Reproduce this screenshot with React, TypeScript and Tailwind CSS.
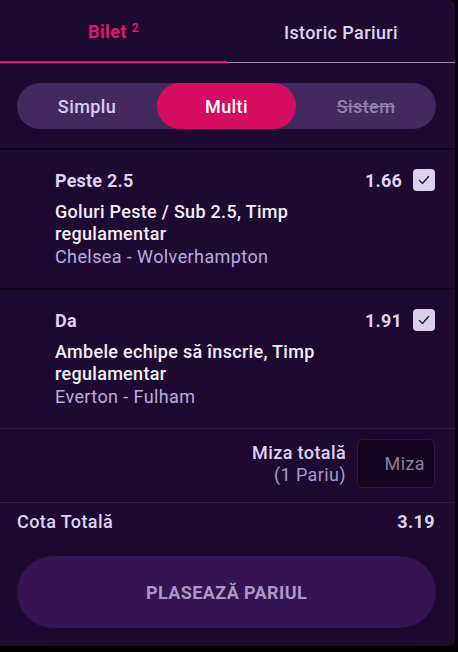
import React from "react";

function Check() {
  return (
    <div className="w-[22px] h-[22px] rounded-[4px] bg-[#d9d0ee] flex items-center justify-center">
      <svg width="16" height="16" viewBox="0 0 16 16" fill="none">
        <path d="M3.5 8.5 L6.5 11.5 L12.5 4.5" stroke="#2a1a40" strokeWidth="1.4" strokeLinecap="round" strokeLinejoin="round" />
      </svg>
    </div>
  );
}

function Bet({ pick, odds, market, teams }: { pick: string; odds: string; market: string; teams: string }) {
  return (
    <div className="pl-[55px] pr-[20px] pt-[19px] pb-[20px] flex flex-col">
      <div className="flex items-center justify-between h-[22px]">
        <span className="text-[18px] font-bold tracking-[0.2px] text-[#dcd2f2]">{pick}</span>
        <div className="flex items-center gap-[11px]">
          <span className="text-[18px] font-bold tracking-[0.2px] text-[#dcd2f2]">{odds}</span>
          <Check />
        </div>
      </div>
      <div className="mt-[10px] text-[18px] font-medium tracking-[0.3px] leading-[22px] text-[#f3eefc] w-[300px]">{market}</div>
      <div className="mt-[1px] text-[18px] tracking-[0.4px] leading-[22px] text-[#b9abe2]">{teams}</div>
    </div>
  );
}

export default function App() {
  return (
    <div className="w-[458px] h-[652px] bg-black" style={{ fontFamily: "Roboto, 'Liberation Sans', sans-serif" }}>
      <div className="w-[455px] h-[646px] bg-[#1e0a31] rounded-r-[6px] flex flex-col">
        {/* Tabs */}
        <div className="flex h-[64px]">
          <div className="w-[227px] flex flex-col">
            <div className="flex-1 flex items-center justify-center pt-[2px]">
              <span className="text-[18px] font-bold tracking-[0.4px] text-[#e0186c]">
                Bilet <span className="text-[12px] relative top-[-6px]">2</span>
              </span>
            </div>
            <div className="h-[2px] bg-[#e0186c] mb-[1px]" />
          </div>
          <div className="flex-1 flex flex-col">
            <div className="flex-1 flex items-center justify-center pt-[2px]">
              <span className="text-[18px] font-medium tracking-[0.4px] text-[#ddd4f3]">Istoric Pariuri</span>
            </div>
            <div className="h-[1px] bg-[#9d8fb5] mb-[1px]" />
          </div>
        </div>
        {/* Toggle */}
        <div className="pl-[17px] pr-[19px] pt-[19px] pb-[19px]">
          <div className="h-[46px] rounded-full bg-[#43295f] flex items-center">
            <div className="w-[140px] h-full flex items-center justify-center text-[18px] font-medium tracking-[0.4px] text-[#d6ccf0]">Simplu</div>
            <div className="w-[139px] h-full rounded-full bg-[#d40d61] flex items-center justify-center text-[18px] font-medium tracking-[0.4px] text-white">Multi</div>
            <div className="flex-1 h-full flex items-center justify-center text-[18px] font-medium tracking-[0.4px] text-[#9081b0] line-through">Sistem</div>
          </div>
        </div>
        <div className="h-[2px] bg-[#0e0418]" />
        <Bet pick="Peste 2.5" odds="1.66" market="Goluri Peste / Sub 2.5, Timp regulamentar" teams="Chelsea - Wolverhampton" />
        <div className="h-[2px] bg-[#0e0418]" />
        <Bet pick="Da" odds="1.91" market="Ambele echipe să înscrie, Timp regulamentar" teams="Everton - Fulham" />
        <div className="h-[1px] bg-[#2f1a48]" />
        {/* Miza */}
        <div className="flex justify-end items-center gap-[11px] pr-[20px] pt-[10px] pb-[14px]">
          <div className="flex flex-col items-end text-[18px] tracking-[0.4px] leading-[22px]">
            <span className="font-medium text-[#ddd4f3]">Miza totală</span>
            <span className="text-[#a899d0]">(1 Pariu)</span>
          </div>
          <div className="w-[78px] h-[49px] rounded-[6px] bg-[#130520] border border-[#2e1946] flex items-center justify-end pr-[9px] text-[18px] tracking-[0.4px] text-[#8a8096]">
            Miza
          </div>
        </div>
        <div className="h-[1px] bg-[#2f1a48]" />
        <div className="flex justify-between items-center pl-[17px] pr-[20px] pt-[5px] text-[18px] tracking-[0.4px] font-medium text-[#ddd4f3]">
          <span>Cota Totală</span>
          <span className="font-bold">3.19</span>
        </div>
        <div className="pl-[17px] pr-[19px] pt-[21px]">
          <div className="h-[72px] rounded-full bg-[#361352] flex items-center justify-center text-[18px] tracking-[0.4px] font-bold text-[#a898c8]">
            PLASEAZĂ PARIUL
          </div>
        </div>
      </div>
    </div>
  );
}
